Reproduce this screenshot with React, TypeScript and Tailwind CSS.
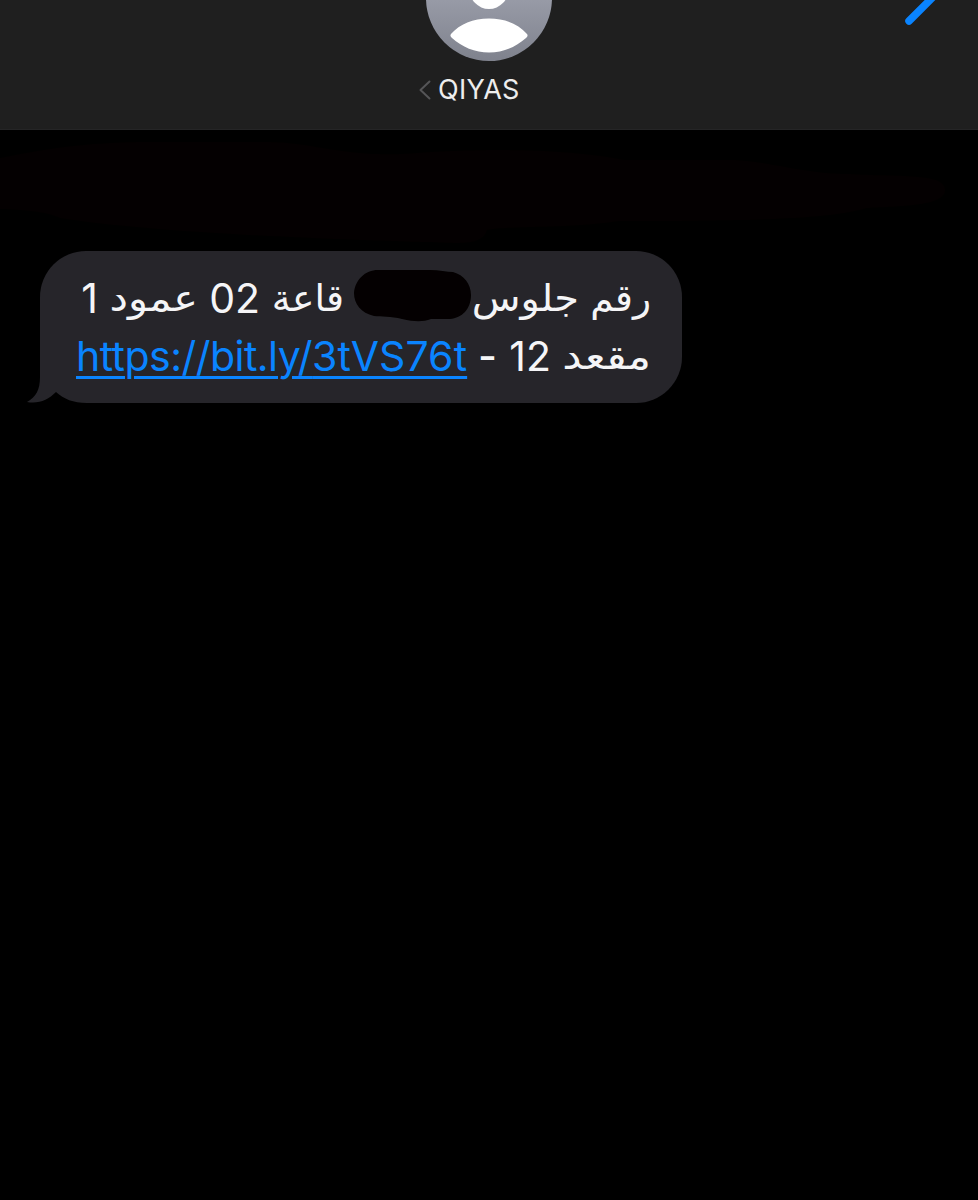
import type { ReactNode } from "react";

function Avatar() {
  return (
    <svg width="128" height="62" viewBox="425 0 128 62" className="block" aria-hidden="true">
      <defs>
        <linearGradient id="avatar" x1="0" y1="0" x2="0" y2="1">
          <stop offset="0" stopColor="#a5aab9" />
          <stop offset="0.5" stopColor="#989ba7" />
          <stop offset="1" stopColor="#7f828d" />
        </linearGradient>
      </defs>
      <circle cx="489" cy="-2" r="63" fill="url(#avatar)" />
      <ellipse cx="489" cy="-12" rx="20" ry="21" fill="#fff" />
      <path d="M451 34C460 24 473 18.500 489 18.500C505 18.500 518 24 527 34Q528.500 36 526 38C516 47 503 52.500 489 52.500C475 52.500 462 47 452 38Q449.500 36 451 34Z" fill="#fff" />
    </svg>
  );
}

function Header() {
  return (
    <header className="flex h-[130px] justify-between border-b border-[#252526] bg-[#1f1f1f]">
      <div className="w-[80px]" />
      <div className="flex flex-col items-center">
        <Avatar />
        <div className="mt-[9px] flex h-9 w-[140px] items-center">
          <svg width="12" height="20" viewBox="0 0 12 20" className="mt-[1px] block" fill="none" stroke="#555557" strokeWidth="2" strokeLinecap="round" strokeLinejoin="round" aria-hidden="true">
            <path d="M10.500 1.500L1.500 10L10.500 18.500" />
          </svg>
          <span className="pt-[1px] pl-[7px] text-[27px] leading-9 tracking-[0.3px] text-[#ededed]">QIYAS</span>
        </div>
      </div>
      <svg width="80" height="30" viewBox="898 0 80 30" className="block" aria-hidden="true">
        <path d="M909 21L936 -6" stroke="#0a84ff" strokeWidth="7.500" strokeLinecap="round" />
      </svg>
    </header>
  );
}

function Arabic({ className, children }: { className: string; children: ReactNode }) {
  return <span className={`block shrink-0 origin-right whitespace-nowrap pt-[1px] font-["DejaVu_Sans",sans-serif] text-[37px] ${className}`}>{children}</span>;
}

function Bubble() {
  return (
    <section className="relative ml-[40px] h-[152px] w-[642px] rounded-[46px] bg-[#26252a] pt-[18px] pr-[31px] pl-[36px] text-[41px] leading-[58px] text-[#f5f5f7]">
      <svg width="60" height="60" viewBox="27 343 60 60" className="absolute bottom-0 left-[-13px]" aria-hidden="true">
        <rect x="27" y="385" width="60" height="18" fill="#000" />
        <path d="M40 343V377C40 390 36 397 27 402C39 404 48 400 56 392C64 399 73 403 87 403V343Z" fill="#26252a" />
      </svg>
      <div className="relative flex h-[58px]" dir="rtl">
        <Arabic className="w-[72px] scale-x-[1.01]">رقم</Arabic>
        <Arabic className="w-[107px] scale-x-[1.08]">جلوس</Arabic>
        <svg width="118" height="53" viewBox="354 268 118 53" className="block shrink-0" aria-hidden="true">
          <path d="M378 269H430C439 269 447 271 453 271C464 274 471 283 471 294C471 308 462 317 450 318H431C423 321 415 321 402 318C391 315 381 316 374 315C361 312 354 303 354 292C355 279 365 269 378 269Z" fill="#040001" />
        </svg>
        <Arabic className="mr-[10px] w-[84px] scale-x-[1.02]">قاعة</Arabic>
        <span className="w-[62px] shrink-0">02</span>
        <Arabic className="w-[100px] scale-x-[1.12]">عمود</Arabic>
        <span className="shrink-0">1</span>
      </div>
      <div className="relative flex h-[58px]" dir="rtl">
        <Arabic className="w-[100px] scale-x-[1.17]">مقعد</Arabic>
        <span className="w-[54px] shrink-0">12</span>
        <span className="w-[30px] shrink-0 font-medium">-</span>
        <a className="block w-[391px] shrink-0 whitespace-nowrap tracking-[-0.53px] text-[#0a84ff] underline decoration-[2.5px] underline-offset-[5px]" dir="ltr" href="#link">https://bit.ly/<span className="tracking-[0.1px]">3tVS76t</span></a>
      </div>
    </section>
  );
}

export default function App() {
  return (
    <main className="h-[1200px] w-[978px] overflow-hidden bg-black font-[Inter,sans-serif]">
      <Header />
      <svg width="978" height="121" viewBox="0 130 978 121" className="block" aria-hidden="true">
        <path d="M0 158C40 150 80 142 150 142H270C310 142 340 156 400 154C490 147 570 149 625 160H735C780 163 800 173 850 174C900 177 944 173 945 189C948 207 895 206 867 208C830 220 740 221 620 221C570 229 520 225 487 230Q484 244 455 243C340 240 150 233 60 218C40 210 20 210 0 209Z" fill="#040001" />
      </svg>
      <Bubble />
    </main>
  );
}
